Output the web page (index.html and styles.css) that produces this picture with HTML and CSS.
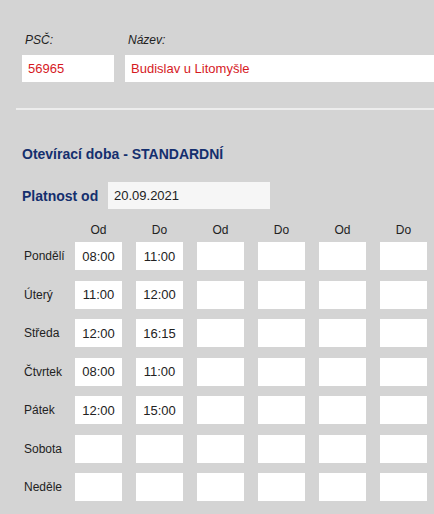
FILE: index.html
```html
<!DOCTYPE html>
<html lang="cs">
<head>
    <meta charset="UTF-8">
    <meta name="viewport" content="width=device-width, initial-scale=1.0">
    <title>Otevírací doba</title>
    <link rel="stylesheet" href="styles.css">
</head>
<body>
    <div class="top">
        <div class="field psc">
            <label>PSČ:</label>
            <input type="text" class="red-input" value="56965">
        </div>
        <div class="field name">
            <label>Název:</label>
            <input type="text" class="red-input" value="Budislav u Litomyšle">
        </div>
    </div>

    <div class="separator"></div>

    <div class="hours">
        <h2>Otevírací doba - STANDARDNÍ</h2>

        <div class="valid-row">
            <span class="valid-label">Platnost od</span>
            <input type="text" class="date-input" value="20.09.2021">
        </div>

        <div class="grid-head">
            <span></span>
            <span class="col-head">Od</span>
            <span class="col-head">Do</span>
            <span class="col-head">Od</span>
            <span class="col-head">Do</span>
            <span class="col-head">Od</span>
            <span class="col-head">Do</span>
        </div>

        <div class="grid">
            <span class="day">Pondělí</span>
            <div class="cell"><input type="text" value="08:00"></div>
            <div class="cell"><input type="text" value="11:00"></div>
            <div class="cell"><input type="text"></div>
            <div class="cell"><input type="text"></div>
            <div class="cell"><input type="text"></div>
            <div class="cell"><input type="text"></div>

            <span class="day">Úterý</span>
            <div class="cell"><input type="text" value="11:00"></div>
            <div class="cell"><input type="text" value="12:00"></div>
            <div class="cell"><input type="text"></div>
            <div class="cell"><input type="text"></div>
            <div class="cell"><input type="text"></div>
            <div class="cell"><input type="text"></div>

            <span class="day">Středa</span>
            <div class="cell"><input type="text" value="12:00"></div>
            <div class="cell"><input type="text" value="16:15"></div>
            <div class="cell"><input type="text"></div>
            <div class="cell"><input type="text"></div>
            <div class="cell"><input type="text"></div>
            <div class="cell"><input type="text"></div>

            <span class="day">Čtvrtek</span>
            <div class="cell"><input type="text" value="08:00"></div>
            <div class="cell"><input type="text" value="11:00"></div>
            <div class="cell"><input type="text"></div>
            <div class="cell"><input type="text"></div>
            <div class="cell"><input type="text"></div>
            <div class="cell"><input type="text"></div>

            <span class="day">Pátek</span>
            <div class="cell"><input type="text" value="12:00"></div>
            <div class="cell"><input type="text" value="15:00"></div>
            <div class="cell"><input type="text"></div>
            <div class="cell"><input type="text"></div>
            <div class="cell"><input type="text"></div>
            <div class="cell"><input type="text"></div>

            <span class="day">Sobota</span>
            <div class="cell"><input type="text"></div>
            <div class="cell"><input type="text"></div>
            <div class="cell"><input type="text"></div>
            <div class="cell"><input type="text"></div>
            <div class="cell"><input type="text"></div>
            <div class="cell"><input type="text"></div>

            <span class="day">Neděle</span>
            <div class="cell"><input type="text"></div>
            <div class="cell"><input type="text"></div>
            <div class="cell"><input type="text"></div>
            <div class="cell"><input type="text"></div>
            <div class="cell"><input type="text"></div>
            <div class="cell"><input type="text"></div>
        </div>
    </div>
</body>
</html>
```

FILE: styles.css
```css
* {
    margin: 0;
    padding: 0;
    box-sizing: border-box;
}

body {
    font-family: 'Liberation Sans', Arial, sans-serif;
    background: #d4d4d4;
    color: #222;
    overflow: hidden;
}

input {
    font-family: 'Liberation Sans', Arial, sans-serif;
    border: none;
    outline: none;
    background: #fff;
    color: #222;
}

.top {
    display: flex;
    gap: 11px;
    padding: 33px 0 0 22px;
}

.field {
    display: flex;
    flex-direction: column;
}

.field label {
    font-size: 12px;
    font-style: italic;
    line-height: 14px;
    margin: 0 0 8px 3px;
    color: #222;
}

.psc {
    width: 92px;
}

.name {
    width: 320px;
}

.red-input {
    height: 27px;
    padding: 0 6px;
    font-size: 13px;
    color: #d61a1f;
}

.separator {
    margin: 26px 0 0 16px;
    border-top: 2px solid #ededed;
}

.hours {
    padding: 0 0 0 22px;
}

.hours h2 {
    font-size: 14px;
    line-height: 16px;
    font-weight: bold;
    color: #142f6e;
    margin-top: 36px;
}

.valid-row {
    display: flex;
    align-items: center;
    gap: 11px;
    margin-top: 20px;
}

.valid-label {
    font-size: 14px;
    font-weight: bold;
    color: #142f6e;
    width: 75px;
    white-space: nowrap;
}

.date-input {
    width: 162px;
    height: 27px;
    padding: 0 6px;
    font-size: 13px;
    background: #f6f6f6;
}

.grid-head,
.grid {
    display: grid;
    grid-template-columns: 53px repeat(6, 61px);
}

.grid-head {
    margin: 14px 0 4px;
}

.col-head {
    font-size: 12px;
    line-height: 15px;
    text-align: center;
    width: 47px;
}

.grid {
    grid-auto-rows: 28px;
    row-gap: 10.5px;
    align-items: center;
}

.day {
    font-size: 12px;
    padding-left: 2px;
    white-space: nowrap;
}

.cell input {
    width: 47px;
    height: 28px;
    font-size: 13px;
    text-align: center;
}
```
